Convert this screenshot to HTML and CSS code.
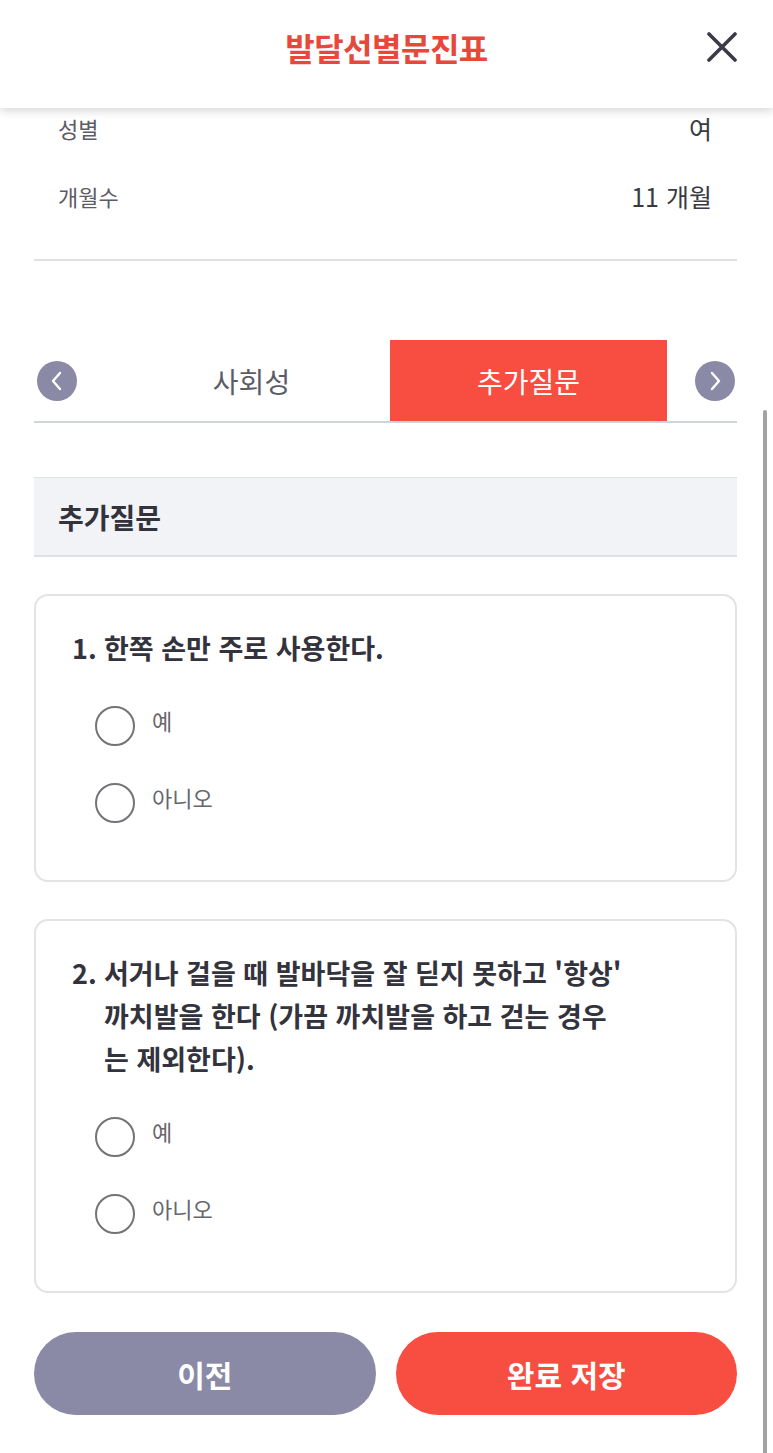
FILE: index.html
```html
<!DOCTYPE html>
<html lang="ko">
<head>
    <meta charset="UTF-8">
    <meta name="viewport" content="width=device-width, initial-scale=1.0">
    <title>발달선별문진표</title>
    <link rel="stylesheet" href="styles.css">
</head>
<body>
    <header class="top-bar">
        <span></span>
        <h1 class="top-title">발달선별문진표</h1>
        <button class="close-btn" aria-label="닫기">
            <svg width="30" height="30" viewBox="0 0 30 30">
                <path d="M2 2 L28 28 M28 2 L2 28" stroke="#3b3b48" stroke-width="3.6" stroke-linecap="round" fill="none"/>
            </svg>
        </button>
    </header>

    <main class="page">
        <div class="info">
            <div class="info-row">
                <span class="info-label">성별</span>
                <span class="info-value">여</span>
            </div>
            <div class="info-row">
                <span class="info-label">개월수</span>
                <span class="info-value">11 개월</span>
            </div>
        </div>

        <nav class="tabs">
            <button class="tab-arrow" aria-label="이전 탭">
                <svg width="40" height="40" viewBox="0 0 40 40">
                    <circle cx="20" cy="20" r="20" fill="#8b8aa6"/>
                    <path d="M23 12 L16 20 L23 28" stroke="#fff" stroke-width="2.4" stroke-linecap="round" stroke-linejoin="round" fill="none"/>
                </svg>
            </button>
            <div class="tab-list">
                <div class="tab">사회성</div>
                <div class="tab active">추가질문</div>
            </div>
            <button class="tab-arrow next" aria-label="다음 탭">
                <svg width="40" height="40" viewBox="0 0 40 40">
                    <circle cx="20" cy="20" r="20" fill="#8b8aa6"/>
                    <path d="M17 12 L24 20 L17 28" stroke="#fff" stroke-width="2.4" stroke-linecap="round" stroke-linejoin="round" fill="none"/>
                </svg>
            </button>
        </nav>

        <div class="section-head">추가질문</div>

        <div class="question-card">
            <p class="question"><span class="q-num">1.</span><span>한쪽 손만 주로 사용한다.</span></p>
            <div class="options">
                <label class="option"><span class="radio"></span><span class="option-text">예</span></label>
                <label class="option"><span class="radio"></span><span class="option-text">아니오</span></label>
            </div>
        </div>

        <div class="question-card">
            <p class="question"><span class="q-num">2.</span><span>서거나 걸을 때 발바닥을 잘 딛지 못하고 '항상' 까치발을 한다 (가끔 까치발을 하고 걷는 경우는 제외한다).</span></p>
            <div class="options">
                <label class="option"><span class="radio"></span><span class="option-text">예</span></label>
                <label class="option"><span class="radio"></span><span class="option-text">아니오</span></label>
            </div>
        </div>

        <div class="actions">
            <button class="btn btn-prev">이전</button>
            <button class="btn btn-save">완료 저장</button>
        </div>
    </main>

    <div class="scroll-thumb"></div>
</body>
</html>
```

FILE: styles.css
```css
:root {
    --red: #f84e42;
    --title-red: #e8473c;
    --purple-gray: #8b8aa6;
    --dark-text: #33333d;
    --mid-text: #5c5c66;
    --line: #e1e1e4;
}

* {
    box-sizing: border-box;
}

html, body {
    margin: 0;
    height: 100%;
    overflow: hidden;
}

body {
    font-family: "Noto Sans CJK KR", "Noto Sans", sans-serif;
    background: #fff;
    color: var(--dark-text);
}

button {
    font-family: inherit;
    border: none;
    background: none;
    padding: 0;
    cursor: pointer;
}

.top-bar {
    position: relative;
    z-index: 2;
    height: 108px;
    padding: 0 36px 14px;
    display: grid;
    grid-template-columns: 1fr auto 1fr;
    align-items: center;
    background: #fff;
    box-shadow: 0 3px 9px rgba(0,0,0,0.16);
}

.top-title {
    margin: 0;
    color: var(--title-red);
    font-size: 32px;
    font-weight: 700;
    letter-spacing: -0.5px;
}

.close-btn {
    justify-self: end;
    display: flex;
}

.page {
    padding: 0 36px 0 34px;
}

.info {
    padding: 0 25px 43px 24px;
    border-bottom: 2px solid var(--line);
    display: flex;
    flex-direction: column;
    gap: 28px;
}

.info-row {
    height: 40px;
    display: flex;
    justify-content: space-between;
    align-items: center;
}

.info-label {
    font-size: 22px;
    color: var(--mid-text);
}

.info-value {
    font-size: 25px;
    color: #3a3a42;
}

.tabs {
    margin-top: 79px;
    height: 83px;
    display: flex;
    align-items: center;
    border-bottom: 2px solid #cfd5dc;
}

.tab-arrow {
    display: flex;
    margin-left: 3px;
}

.tab-arrow.next {
    margin-left: 28px;
}

.tab-list {
    display: flex;
    align-self: stretch;
    margin-left: 36px;
}

.tab {
    width: 277px;
    display: flex;
    align-items: center;
    justify-content: center;
    font-size: 28px;
    color: var(--mid-text);
}

.tab.active {
    background: var(--red);
    color: #fff;
}

.section-head {
    margin-top: 54px;
    height: 80px;
    padding-left: 24px;
    display: flex;
    align-items: center;
    background: #f1f3f6;
    border-top: 1px solid #dde0e5;
    border-bottom: 2px solid #dde0e5;
    font-size: 28px;
    font-weight: 700;
    color: var(--dark-text);
}

.question-card {
    margin-top: 37px;
    padding: 30px 107px 57px 36px;
    border: 2px solid #e3e3e6;
    border-radius: 14px;
}

.question {
    margin: 0;
    display: flex;
    font-size: 27px;
    font-weight: 700;
    line-height: 43px;
    color: var(--dark-text);
    word-break: break-all;
}

.q-num {
    flex: 0 0 32px;
}

.options {
    margin-top: 37px;
    padding-left: 23px;
    display: flex;
    flex-direction: column;
    gap: 37px;
}

.option {
    display: flex;
    align-items: flex-start;
    gap: 17px;
}

.radio {
    width: 40px;
    height: 40px;
    border: 2px solid #737378;
    border-radius: 50%;
}

.option-text {
    font-size: 22px;
    line-height: 28px;
    color: #66666e;
}

.actions {
    margin-top: 39px;
    display: grid;
    grid-template-columns: 1fr 1fr;
    gap: 20px;
}

.btn {
    height: 83px;
    border-radius: 42px;
    color: #fff;
    font-size: 30px;
    font-weight: 700;
}

.btn-prev {
    background: var(--purple-gray);
}

.btn-save {
    background: var(--red);
}

.scroll-thumb {
    position: fixed;
    top: 410px;
    bottom: 0;
    right: 6px;
    width: 4px;
    border-radius: 2px 2px 0 0;
    background: #a3a3a3;
}
```
